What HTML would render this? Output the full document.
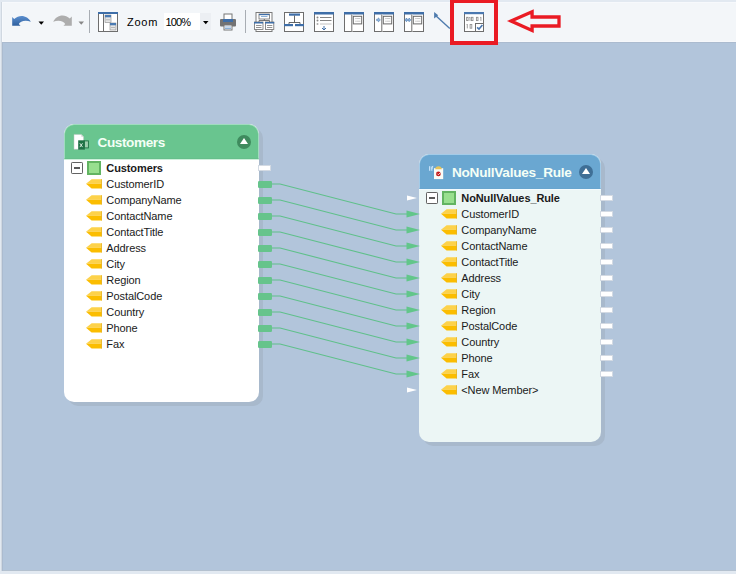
<!DOCTYPE html>
<html><head><meta charset="utf-8">
<style>
*{margin:0;padding:0;box-sizing:border-box}
html,body{width:736px;height:574px;overflow:hidden;background:#e2e9f1;font-family:"Liberation Sans",sans-serif;}
#tb{position:absolute;left:2px;top:2px;width:734px;height:40px;background:#f3f6f9;box-shadow:inset 1px 1px 0 #f7f9fc, inset 0 -1px 0 #f6f8fb;}
#vl{position:absolute;left:1px;top:2px;width:1px;height:569px;background:#d0d8e1}
#cv{position:absolute;left:2px;top:42px;width:734px;height:529px;background:#b2c5db;box-shadow:inset 1px 1px 0 #abbbcf, inset 0 -1px 0 #b4c1cf;}
.abs{position:absolute}
svg{position:absolute;overflow:visible}
.shadow{position:absolute;background:#a8b9cc;border-radius:10px}
.tbl{position:absolute;border-radius:10px;overflow:hidden}
.hdr{position:absolute;left:0;top:0;right:0;height:34px}
.t{position:absolute;font-size:11px;line-height:16px;color:#1a1a1a;white-space:nowrap;letter-spacing:-0.1px}
.ht{position:absolute;font-size:13.6px;font-weight:bold;line-height:16px;color:#f4fff6;white-space:nowrap;letter-spacing:-0.25px}
.mb{position:absolute;width:11.5px;height:11.5px;border:1.5px solid #626262;border-radius:1.2px;background:#fff}
.mbl{position:absolute;left:1.9px;top:4.2px;width:5.8px;height:1.5px;background:#5a5a5a}
.gs{position:absolute;width:13.5px;height:13.5px;border:2.5px solid #62b462;background:#98df8f}
.cw{position:absolute;width:13px;height:6px;background:#fff;border:1px solid #d3dae3}
.cg{position:absolute;width:14px;height:7px;background:#66c48c;border-radius:1.2px}
.cb{position:absolute;width:14px;height:14px;border-radius:50%}
.sep{position:absolute;width:1px;background:#a8adb3}
</style></head><body>
<div id="vl"></div>
<div id="tb"></div>
<div id="cv"></div>

<div class="shadow" style="left:68px;top:128px;width:195px;height:278px"></div>
<div class="shadow" style="left:423px;top:158px;width:182px;height:288px"></div>
<div class="tbl" style="left:64px;top:124px;width:195px;height:278px;background:#fff"><div class="hdr" style="background:#69c58f;height:35px;border:1px solid #a0dcbe;border-bottom:1px solid #66bf8b;border-radius:10px 10px 0 0"></div><div class="hdr" style="top:35px;height:1px;background:#cdf0da"></div></div>
<div class="tbl" style="left:419px;top:154px;width:182px;height:288px;background:#ecf6f5"><div class="hdr" style="background:#6aa7d1;height:35px;border:1px solid #a2cbe8;border-bottom:1px solid #68a5cf;border-radius:10px 10px 0 0"></div><div class="hdr" style="top:35px;height:1px;background:#f3fbfe"></div></div>
<div class="ht" style="left:97.5px;top:135px;letter-spacing:-0.4px">Customers</div>
<div class="ht" style="left:452px;top:165px">NoNullValues_Rule</div>
<div class="cb" style="left:237px;top:135px;background:#3f8b5e"></div>
<svg style="left:240px;top:138px" width="8" height="6" viewBox="0 0 8 6"><path d="M4 0 L8 6 H0 Z" fill="#fff"/></svg>
<div class="cb" style="left:579px;top:165px;background:#3f6f96"></div>
<svg style="left:582px;top:168px" width="8" height="6" viewBox="0 0 8 6"><path d="M4 0 L8 6 H0 Z" fill="#fff"/></svg>
<svg style="left:73px;top:133px" width="17" height="18" viewBox="0 0 17 18">
<path d="M1 1.4 H8.3 L10.6 3.7 V16.3 H1 Z" fill="#fff" stroke="#b8c4bc" stroke-width="0.5"/>
<path d="M8.3 1.4 V3.7 H10.6 Z" fill="#d4d4d4"/>
<rect x="11.2" y="7.9" width="4.2" height="7" fill="#9fcfb0" stroke="#1e7145" stroke-width="0.9"/>
<rect x="5.2" y="7.3" width="6.6" height="9.4" fill="#1e7145"/>
<path d="M6.9 10.3 L9.5 14.1 M9.5 10.3 L6.9 14.1" stroke="#e8f4ec" stroke-width="0.9"/>
</svg>
<svg style="left:428px;top:165px" width="16" height="16" viewBox="0 0 16 16">
<rect x="1" y="1.2" width="1.3" height="4.6" fill="#c4e2fa"/>
<path d="M3.8 5.8 V2.4 Q3.8 1.3 5.2 1.3 M2.9 3 H5" stroke="#c4e2fa" stroke-width="1.2" fill="none"/>
<rect x="6" y="3.2" width="9.2" height="10.9" fill="#fbfbf6"/>
<path d="M7.2 4.2 Q7.4 1.2 10.5 1.2 Q13.6 1.2 13.8 4.2 Z" fill="#e6c45a"/>
<circle cx="10.4" cy="8.9" r="2.35" fill="#c41a1a"/>
<path d="M9.4 8.7 L10.4 9.7 L12.4 7.6" stroke="#fff" stroke-width="0.8" fill="none"/>
</svg>
<div class="mb" style="left:71.2px;top:162.2px"><div class="mbl"></div></div>
<div class="gs" style="left:87.1px;top:161.2px"></div>
<div class="t" style="left:106.3px;top:160px;font-weight:bold">Customers</div>
<div class="cw" style="left:258px;top:165px"></div>
<svg class="ic" style="left:85px;top:179px" width="17" height="10" viewBox="0 0 17 10"><path d="M1 4.8 L6.6 0.2 H16.7 V4.8 Z" fill="#fdd24a"/><path d="M1 4.8 L6.6 9.6 H16.7 V4.8 Z" fill="#fbbd00"/><rect x="16" y="0.2" width="0.7" height="9.4" fill="#e3ab10"/></svg>
<div class="t" style="left:106.3px;top:176px">CustomerID</div>
<div class="cg" style="left:258px;top:181px"></div>
<svg class="ic" style="left:85px;top:195px" width="17" height="10" viewBox="0 0 17 10"><path d="M1 4.8 L6.6 0.2 H16.7 V4.8 Z" fill="#fdd24a"/><path d="M1 4.8 L6.6 9.6 H16.7 V4.8 Z" fill="#fbbd00"/><rect x="16" y="0.2" width="0.7" height="9.4" fill="#e3ab10"/></svg>
<div class="t" style="left:106.3px;top:192px">CompanyName</div>
<div class="cg" style="left:258px;top:197px"></div>
<svg class="ic" style="left:85px;top:211px" width="17" height="10" viewBox="0 0 17 10"><path d="M1 4.8 L6.6 0.2 H16.7 V4.8 Z" fill="#fdd24a"/><path d="M1 4.8 L6.6 9.6 H16.7 V4.8 Z" fill="#fbbd00"/><rect x="16" y="0.2" width="0.7" height="9.4" fill="#e3ab10"/></svg>
<div class="t" style="left:106.3px;top:208px">ContactName</div>
<div class="cg" style="left:258px;top:213px"></div>
<svg class="ic" style="left:85px;top:227px" width="17" height="10" viewBox="0 0 17 10"><path d="M1 4.8 L6.6 0.2 H16.7 V4.8 Z" fill="#fdd24a"/><path d="M1 4.8 L6.6 9.6 H16.7 V4.8 Z" fill="#fbbd00"/><rect x="16" y="0.2" width="0.7" height="9.4" fill="#e3ab10"/></svg>
<div class="t" style="left:106.3px;top:224px">ContactTitle</div>
<div class="cg" style="left:258px;top:229px"></div>
<svg class="ic" style="left:85px;top:243px" width="17" height="10" viewBox="0 0 17 10"><path d="M1 4.8 L6.6 0.2 H16.7 V4.8 Z" fill="#fdd24a"/><path d="M1 4.8 L6.6 9.6 H16.7 V4.8 Z" fill="#fbbd00"/><rect x="16" y="0.2" width="0.7" height="9.4" fill="#e3ab10"/></svg>
<div class="t" style="left:106.3px;top:240px">Address</div>
<div class="cg" style="left:258px;top:245px"></div>
<svg class="ic" style="left:85px;top:259px" width="17" height="10" viewBox="0 0 17 10"><path d="M1 4.8 L6.6 0.2 H16.7 V4.8 Z" fill="#fdd24a"/><path d="M1 4.8 L6.6 9.6 H16.7 V4.8 Z" fill="#fbbd00"/><rect x="16" y="0.2" width="0.7" height="9.4" fill="#e3ab10"/></svg>
<div class="t" style="left:106.3px;top:256px">City</div>
<div class="cg" style="left:258px;top:261px"></div>
<svg class="ic" style="left:85px;top:275px" width="17" height="10" viewBox="0 0 17 10"><path d="M1 4.8 L6.6 0.2 H16.7 V4.8 Z" fill="#fdd24a"/><path d="M1 4.8 L6.6 9.6 H16.7 V4.8 Z" fill="#fbbd00"/><rect x="16" y="0.2" width="0.7" height="9.4" fill="#e3ab10"/></svg>
<div class="t" style="left:106.3px;top:272px">Region</div>
<div class="cg" style="left:258px;top:277px"></div>
<svg class="ic" style="left:85px;top:291px" width="17" height="10" viewBox="0 0 17 10"><path d="M1 4.8 L6.6 0.2 H16.7 V4.8 Z" fill="#fdd24a"/><path d="M1 4.8 L6.6 9.6 H16.7 V4.8 Z" fill="#fbbd00"/><rect x="16" y="0.2" width="0.7" height="9.4" fill="#e3ab10"/></svg>
<div class="t" style="left:106.3px;top:288px">PostalCode</div>
<div class="cg" style="left:258px;top:293px"></div>
<svg class="ic" style="left:85px;top:307px" width="17" height="10" viewBox="0 0 17 10"><path d="M1 4.8 L6.6 0.2 H16.7 V4.8 Z" fill="#fdd24a"/><path d="M1 4.8 L6.6 9.6 H16.7 V4.8 Z" fill="#fbbd00"/><rect x="16" y="0.2" width="0.7" height="9.4" fill="#e3ab10"/></svg>
<div class="t" style="left:106.3px;top:304px">Country</div>
<div class="cg" style="left:258px;top:309px"></div>
<svg class="ic" style="left:85px;top:323px" width="17" height="10" viewBox="0 0 17 10"><path d="M1 4.8 L6.6 0.2 H16.7 V4.8 Z" fill="#fdd24a"/><path d="M1 4.8 L6.6 9.6 H16.7 V4.8 Z" fill="#fbbd00"/><rect x="16" y="0.2" width="0.7" height="9.4" fill="#e3ab10"/></svg>
<div class="t" style="left:106.3px;top:320px">Phone</div>
<div class="cg" style="left:258px;top:325px"></div>
<svg class="ic" style="left:85px;top:339px" width="17" height="10" viewBox="0 0 17 10"><path d="M1 4.8 L6.6 0.2 H16.7 V4.8 Z" fill="#fdd24a"/><path d="M1 4.8 L6.6 9.6 H16.7 V4.8 Z" fill="#fbbd00"/><rect x="16" y="0.2" width="0.7" height="9.4" fill="#e3ab10"/></svg>
<div class="t" style="left:106.3px;top:336px">Fax</div>
<div class="cg" style="left:258px;top:341px"></div>
<div class="mb" style="left:426.2px;top:192.2px"><div class="mbl"></div></div>
<div class="gs" style="left:442.1px;top:191.2px"></div>
<div class="t" style="left:461.3px;top:190px;font-weight:bold">NoNullValues_Rule</div>
<svg class="ic" style="left:440px;top:209px" width="17" height="10" viewBox="0 0 17 10"><path d="M1 4.8 L6.6 0.2 H16.7 V4.8 Z" fill="#fdd24a"/><path d="M1 4.8 L6.6 9.6 H16.7 V4.8 Z" fill="#fbbd00"/><rect x="16" y="0.2" width="0.7" height="9.4" fill="#e3ab10"/></svg>
<div class="t" style="left:461.3px;top:206px">CustomerID</div>
<svg class="ic" style="left:440px;top:225px" width="17" height="10" viewBox="0 0 17 10"><path d="M1 4.8 L6.6 0.2 H16.7 V4.8 Z" fill="#fdd24a"/><path d="M1 4.8 L6.6 9.6 H16.7 V4.8 Z" fill="#fbbd00"/><rect x="16" y="0.2" width="0.7" height="9.4" fill="#e3ab10"/></svg>
<div class="t" style="left:461.3px;top:222px">CompanyName</div>
<svg class="ic" style="left:440px;top:241px" width="17" height="10" viewBox="0 0 17 10"><path d="M1 4.8 L6.6 0.2 H16.7 V4.8 Z" fill="#fdd24a"/><path d="M1 4.8 L6.6 9.6 H16.7 V4.8 Z" fill="#fbbd00"/><rect x="16" y="0.2" width="0.7" height="9.4" fill="#e3ab10"/></svg>
<div class="t" style="left:461.3px;top:238px">ContactName</div>
<svg class="ic" style="left:440px;top:257px" width="17" height="10" viewBox="0 0 17 10"><path d="M1 4.8 L6.6 0.2 H16.7 V4.8 Z" fill="#fdd24a"/><path d="M1 4.8 L6.6 9.6 H16.7 V4.8 Z" fill="#fbbd00"/><rect x="16" y="0.2" width="0.7" height="9.4" fill="#e3ab10"/></svg>
<div class="t" style="left:461.3px;top:254px">ContactTitle</div>
<svg class="ic" style="left:440px;top:273px" width="17" height="10" viewBox="0 0 17 10"><path d="M1 4.8 L6.6 0.2 H16.7 V4.8 Z" fill="#fdd24a"/><path d="M1 4.8 L6.6 9.6 H16.7 V4.8 Z" fill="#fbbd00"/><rect x="16" y="0.2" width="0.7" height="9.4" fill="#e3ab10"/></svg>
<div class="t" style="left:461.3px;top:270px">Address</div>
<svg class="ic" style="left:440px;top:289px" width="17" height="10" viewBox="0 0 17 10"><path d="M1 4.8 L6.6 0.2 H16.7 V4.8 Z" fill="#fdd24a"/><path d="M1 4.8 L6.6 9.6 H16.7 V4.8 Z" fill="#fbbd00"/><rect x="16" y="0.2" width="0.7" height="9.4" fill="#e3ab10"/></svg>
<div class="t" style="left:461.3px;top:286px">City</div>
<svg class="ic" style="left:440px;top:305px" width="17" height="10" viewBox="0 0 17 10"><path d="M1 4.8 L6.6 0.2 H16.7 V4.8 Z" fill="#fdd24a"/><path d="M1 4.8 L6.6 9.6 H16.7 V4.8 Z" fill="#fbbd00"/><rect x="16" y="0.2" width="0.7" height="9.4" fill="#e3ab10"/></svg>
<div class="t" style="left:461.3px;top:302px">Region</div>
<svg class="ic" style="left:440px;top:321px" width="17" height="10" viewBox="0 0 17 10"><path d="M1 4.8 L6.6 0.2 H16.7 V4.8 Z" fill="#fdd24a"/><path d="M1 4.8 L6.6 9.6 H16.7 V4.8 Z" fill="#fbbd00"/><rect x="16" y="0.2" width="0.7" height="9.4" fill="#e3ab10"/></svg>
<div class="t" style="left:461.3px;top:318px">PostalCode</div>
<svg class="ic" style="left:440px;top:337px" width="17" height="10" viewBox="0 0 17 10"><path d="M1 4.8 L6.6 0.2 H16.7 V4.8 Z" fill="#fdd24a"/><path d="M1 4.8 L6.6 9.6 H16.7 V4.8 Z" fill="#fbbd00"/><rect x="16" y="0.2" width="0.7" height="9.4" fill="#e3ab10"/></svg>
<div class="t" style="left:461.3px;top:334px">Country</div>
<svg class="ic" style="left:440px;top:353px" width="17" height="10" viewBox="0 0 17 10"><path d="M1 4.8 L6.6 0.2 H16.7 V4.8 Z" fill="#fdd24a"/><path d="M1 4.8 L6.6 9.6 H16.7 V4.8 Z" fill="#fbbd00"/><rect x="16" y="0.2" width="0.7" height="9.4" fill="#e3ab10"/></svg>
<div class="t" style="left:461.3px;top:350px">Phone</div>
<svg class="ic" style="left:440px;top:369px" width="17" height="10" viewBox="0 0 17 10"><path d="M1 4.8 L6.6 0.2 H16.7 V4.8 Z" fill="#fdd24a"/><path d="M1 4.8 L6.6 9.6 H16.7 V4.8 Z" fill="#fbbd00"/><rect x="16" y="0.2" width="0.7" height="9.4" fill="#e3ab10"/></svg>
<div class="t" style="left:461.3px;top:366px">Fax</div>
<svg class="ic" style="left:440px;top:385px" width="17" height="10" viewBox="0 0 17 10"><path d="M1 4.8 L6.6 0.2 H16.7 V4.8 Z" fill="#fdd24a"/><path d="M1 4.8 L6.6 9.6 H16.7 V4.8 Z" fill="#fbbd00"/><rect x="16" y="0.2" width="0.7" height="9.4" fill="#e3ab10"/></svg>
<div class="t" style="left:461.3px;top:382px">&lt;New Member&gt;</div>
<div class="cw" style="left:600px;top:195px"></div>
<div class="cw" style="left:600px;top:211px"></div>
<div class="cw" style="left:600px;top:227px"></div>
<div class="cw" style="left:600px;top:243px"></div>
<div class="cw" style="left:600px;top:259px"></div>
<div class="cw" style="left:600px;top:275px"></div>
<div class="cw" style="left:600px;top:291px"></div>
<div class="cw" style="left:600px;top:307px"></div>
<div class="cw" style="left:600px;top:323px"></div>
<div class="cw" style="left:600px;top:339px"></div>
<div class="cw" style="left:600px;top:355px"></div>
<div class="cw" style="left:600px;top:371px"></div>
<svg style="left:0;top:0" width="736" height="574">
<polyline points="272,184 280,184 396,214 407,214" fill="none" stroke="#5fc08a" stroke-width="1.1"/>
<path d="M406.5 210.5 L420 214 L406.5 217.5 Z" fill="#62c68a"/>
<polyline points="272,200 280,200 396,230 407,230" fill="none" stroke="#5fc08a" stroke-width="1.1"/>
<path d="M406.5 226.5 L420 230 L406.5 233.5 Z" fill="#62c68a"/>
<polyline points="272,216 280,216 396,246 407,246" fill="none" stroke="#5fc08a" stroke-width="1.1"/>
<path d="M406.5 242.5 L420 246 L406.5 249.5 Z" fill="#62c68a"/>
<polyline points="272,232 280,232 396,262 407,262" fill="none" stroke="#5fc08a" stroke-width="1.1"/>
<path d="M406.5 258.5 L420 262 L406.5 265.5 Z" fill="#62c68a"/>
<polyline points="272,248 280,248 396,278 407,278" fill="none" stroke="#5fc08a" stroke-width="1.1"/>
<path d="M406.5 274.5 L420 278 L406.5 281.5 Z" fill="#62c68a"/>
<polyline points="272,264 280,264 396,294 407,294" fill="none" stroke="#5fc08a" stroke-width="1.1"/>
<path d="M406.5 290.5 L420 294 L406.5 297.5 Z" fill="#62c68a"/>
<polyline points="272,280 280,280 396,310 407,310" fill="none" stroke="#5fc08a" stroke-width="1.1"/>
<path d="M406.5 306.5 L420 310 L406.5 313.5 Z" fill="#62c68a"/>
<polyline points="272,296 280,296 396,326 407,326" fill="none" stroke="#5fc08a" stroke-width="1.1"/>
<path d="M406.5 322.5 L420 326 L406.5 329.5 Z" fill="#62c68a"/>
<polyline points="272,312 280,312 396,342 407,342" fill="none" stroke="#5fc08a" stroke-width="1.1"/>
<path d="M406.5 338.5 L420 342 L406.5 345.5 Z" fill="#62c68a"/>
<polyline points="272,328 280,328 396,358 407,358" fill="none" stroke="#5fc08a" stroke-width="1.1"/>
<path d="M406.5 354.5 L420 358 L406.5 361.5 Z" fill="#62c68a"/>
<polyline points="272,344 280,344 396,374 407,374" fill="none" stroke="#5fc08a" stroke-width="1.1"/>
<path d="M406.5 370.5 L420 374 L406.5 377.5 Z" fill="#62c68a"/>
<path d="M407 195.5 L417 198 L407 200.5 Z" fill="#fff"/>
<path d="M407 387.5 L417 390 L407 392.5 Z" fill="#fff"/>
</svg>

<!-- undo -->
<svg style="left:11px;top:14px" width="22" height="13" viewBox="0 0 22 13">
<defs><linearGradient id="ug" x1="0" y1="0" x2="0" y2="1"><stop offset="0" stop-color="#5b8fcf"/><stop offset="1" stop-color="#2f609f"/></linearGradient></defs><path d="M1.2 3 L1.2 11.7 L9.5 11.7 L7.8 10 C9 7.5 14 5.5 19.8 7.8 C17 2 9 -0.5 3.2 5 Z" fill="url(#ug)"/>
</svg>
<svg style="left:38px;top:21px" width="7" height="5" viewBox="0 0 7 5"><path d="M0.5 0.5 H6 L3.25 3.8 Z" fill="#000"/></svg>
<!-- redo -->
<svg style="left:51px;top:14px" width="22" height="13" viewBox="0 0 22 13">
<path d="M20.8 2.6 L20.8 11.7 L12.5 11.7 L14.2 10 C13 7.5 8 5.5 2.2 7.8 C5 1.5 13 -1 18.8 4.6 Z" fill="#adadad"/>
</svg>
<svg style="left:78px;top:21px" width="7" height="5" viewBox="0 0 7 5"><path d="M0.5 0.5 H6 L3.25 3.8 Z" fill="#888"/></svg>
<div class="sep" style="left:89px;top:10px;height:23px"></div>
<!-- layout icon -->
<svg style="left:98px;top:12px" width="20" height="20" viewBox="0 0 20 20">
<rect x="0.5" y="0.5" width="19" height="19" fill="#fff" stroke="#6e6e6e"/>
<rect x="0" y="0" width="20" height="2" fill="#3e6ea8"/>
<path d="M5.5 2 V19.5" stroke="#6e6e6e"/>
<rect x="7" y="3" width="6" height="7.5" fill="#e6e6e6" stroke="#888" stroke-width="0.6"/>
<rect x="7" y="3" width="6" height="2.3" fill="#4a7ab2"/><path d="M8 7.8 H12" stroke="#999" stroke-width="0.6"/>
<rect x="12" y="11" width="6" height="7" fill="#e6e6e6" stroke="#888" stroke-width="0.6"/>
<rect x="12" y="11" width="6" height="2.3" fill="#4a7ab2"/><path d="M13 15.5 H17" stroke="#999" stroke-width="0.6"/>
</svg>
<div class="abs" style="left:127px;top:14px;font-size:11px;line-height:16px;color:#000;letter-spacing:0.75px">Zoom</div>
<div class="abs" style="left:164px;top:13px;width:47px;height:17px;background:#fff"></div>
<div class="abs" style="left:200px;top:13px;width:11px;height:17px;background:#eceff3"></div>
<div class="abs" style="left:165.5px;top:14px;font-size:11px;line-height:16px;color:#000;letter-spacing:-0.9px">100%</div>
<svg style="left:203px;top:21px" width="6" height="4" viewBox="0 0 6 4"><path d="M0 0 H5.5 L2.75 3.3 Z" fill="#000"/></svg>
<!-- printer -->
<svg style="left:220px;top:14px" width="17" height="16" viewBox="0 0 17 16">
<rect x="4" y="0" width="8" height="6" fill="#fff" stroke="#777" stroke-width="1"/>
<rect x="0" y="5" width="16" height="7.5" rx="1" fill="#737373"/>
<rect x="3" y="5" width="10" height="3" fill="#3e6ea8"/>
<rect x="4" y="11" width="8" height="5" fill="#fff" stroke="#777" stroke-width="1"/>
<path d="M5 13 H11 M5 14.5 H11" stroke="#6f9ccc" stroke-width="0.8"/>
</svg>
<div class="sep" style="left:245px;top:10px;height:23px"></div>

<svg style="left:254px;top:12px" width="21" height="20" viewBox="0 0 21 20">
<rect x="2" y="0.5" width="16" height="19" fill="#fff" stroke="#7a7a7a"/>
<rect x="5" y="2" width="10.5" height="5" fill="#fff" stroke="#6e6e6e" stroke-width="0.8"/>
<rect x="5" y="2" width="10.5" height="1.2" fill="#3e6ea8"/>
<path d="M7 4.5 H13.5" stroke="#6f9ccc" stroke-width="0.8"/>
<path d="M10.3 7 V8.5 M5 10 V8.5 H15.5 V10" stroke="#555" stroke-width="0.8" fill="none"/>
<rect x="0.5" y="10" width="8.5" height="7.5" fill="#fff" stroke="#6e6e6e" stroke-width="0.8"/>
<rect x="0" y="10" width="9" height="1.5" fill="#3e6ea8"/>
<path d="M2 13.5 H7.5 M2 15.5 H7.5" stroke="#777" stroke-width="0.8"/>
<rect x="11.5" y="10" width="8.3" height="7.5" fill="#fff" stroke="#6e6e6e" stroke-width="0.8"/>
<rect x="11.1" y="10" width="9.1" height="1.5" fill="#3e6ea8"/>
<path d="M13 13.5 H18.3 M13 15.5 H18.3" stroke="#777" stroke-width="0.8"/>
</svg>
<svg style="left:284px;top:12px" width="20" height="20" viewBox="0 0 20 20"><rect x="0.5" y="0.5" width="19" height="19" fill="#fff" stroke="#6e6e6e"/><rect x="5" y="1.5" width="11" height="2.2" fill="#3e6ea8"/><path d="M10.5 3.5 V10.5 M5 12.5 V10.5 H16 V12.5" stroke="#555" stroke-width="0.9" fill="none"/><rect x="0" y="12" width="9" height="2.2" fill="#3e6ea8"/><rect x="11" y="12" width="9" height="2.2" fill="#3e6ea8"/></svg>
<svg style="left:314px;top:12px" width="20" height="20" viewBox="0 0 20 20"><rect x="0.5" y="0.5" width="19" height="19" fill="#fff" stroke="#6e6e6e"/><rect x="0" y="0" width="20" height="2.5" fill="#3e6ea8"/><circle cx="3.5" cy="5.5" r="1" fill="#888"/><circle cx="3.5" cy="8.5" r="1" fill="#888"/><circle cx="3.5" cy="12" r="1" fill="#aaa"/><path d="M6 5.5 H17.5 M6 8.5 H17.5" stroke="#777" stroke-width="0.9"/><path d="M6 12 H17.5" stroke="#bbb" stroke-width="0.9"/><path d="M10 14 V18 M8 16 L10 18 L12 16" stroke="#3e6ea8" stroke-width="1" fill="none"/></svg>
<svg style="left:344px;top:12px" width="20" height="20" viewBox="0 0 20 20"><rect x="0.5" y="0.5" width="19" height="19" fill="#fff" stroke="#6e6e6e"/><rect x="0" y="0" width="20" height="2.5" fill="#3e6ea8"/><rect x="7" y="2.5" width="1" height="17" fill="#9a9a9a"/><rect x="8" y="2.5" width="1" height="17" fill="#d4d4d4"/><rect x="9.3" y="4.3" width="8.4" height="7.6" fill="#fff" stroke="#6a6a6a" stroke-width="1"/><path d="M12.2 6.6 H16.4 M12.2 9.2 H16.4" stroke="#b5b5b5" stroke-width="0.8"/><path d="M11 6.6 H11.6 M11 9.2 H11.6" stroke="#999" stroke-width="0.8"/></svg>
<svg style="left:374px;top:12px" width="20" height="20" viewBox="0 0 20 20"><rect x="0.5" y="0.5" width="19" height="19" fill="#fff" stroke="#6e6e6e"/><rect x="0" y="0" width="20" height="2.5" fill="#3e6ea8"/><rect x="7" y="2.5" width="1" height="17" fill="#9a9a9a"/><rect x="8" y="2.5" width="1" height="17" fill="#d4d4d4"/><rect x="9.3" y="4.3" width="8.4" height="7.6" fill="#fff" stroke="#6a6a6a" stroke-width="1"/><path d="M12.2 6.6 H16.4 M12.2 9.2 H16.4" stroke="#b5b5b5" stroke-width="0.8"/><path d="M11 6.6 H11.6 M11 9.2 H11.6" stroke="#999" stroke-width="0.8"/><path d="M2.6 7.2 H4.3 V5.9 L6.4 7.9 L4.3 9.9 V8.6 H2.6 Z" fill="#9cc0e8" stroke="#4a7ab0" stroke-width="0.6"/></svg>
<svg style="left:404px;top:12px" width="20" height="20" viewBox="0 0 20 20"><rect x="0.5" y="0.5" width="19" height="19" fill="#fff" stroke="#6e6e6e"/><rect x="0" y="0" width="20" height="2.5" fill="#3e6ea8"/><rect x="7" y="2.5" width="1" height="17" fill="#9a9a9a"/><rect x="8" y="2.5" width="1" height="17" fill="#d4d4d4"/><rect x="9.3" y="4.3" width="8.4" height="7.6" fill="#fff" stroke="#6a6a6a" stroke-width="1"/><path d="M12.2 6.6 H16.4 M12.2 9.2 H16.4" stroke="#b5b5b5" stroke-width="0.8"/><path d="M11 6.6 H11.6 M11 9.2 H11.6" stroke="#999" stroke-width="0.8"/><path d="M0.8 7.9 L2.6 6 V7.3 H5 V6 L6.9 7.9 L5 9.8 V8.5 H2.6 V9.8 Z" fill="#8fb4e0" stroke="#4a7ab0" stroke-width="0.6"/></svg>
<svg style="left:428px;top:6px" width="28" height="28" viewBox="0 0 28 28">
<path d="M7.6 9.6 L21.8 22.6" stroke="#4e7bad" stroke-width="1.4"/>
<path d="M6.1 6 L10.2 9.2 L6.1 12.5 Z" fill="#4e7bad"/>
</svg>
<svg style="left:464px;top:12px" width="20" height="20" viewBox="0 0 20 20">
<rect x="0.5" y="0.5" width="19" height="19" fill="#fff" stroke="#6e6e6e"/>
<rect x="0" y="0" width="20" height="2.2" fill="#4a78b0"/>
<g fill="none" stroke="#8e8e8e" stroke-width="0.85">
<rect x="2.6" y="5.3" width="1.5" height="3.3"/><path d="M6 5 V8.9 M5.3 5.7 L6 5"/><rect x="7.4" y="5.3" width="1.6" height="3.3"/><rect x="12.4" y="5.3" width="1.6" height="3.3"/><path d="M16.9 5 V8.9 M16.2 5.7 L16.9 5"/>
<path d="M3.3 12.2 V16.4 M2.6 12.9 L3.3 12.2"/><rect x="6.1" y="12.5" width="1.7" height="3.7"/>
</g>
<rect x="11.5" y="11.5" width="8" height="8" fill="#fff" stroke="#6e6e6e" stroke-width="1"/>
<path d="M13.1 15.3 L15 17.1 L18.4 13.1" stroke="#4a78b0" stroke-width="1.6" fill="none"/>
</svg>
<div class="abs" style="left:450px;top:-1px;width:48px;height:46px;border:4px solid #ea1b24"></div>
<svg style="left:0;top:0" width="736" height="50"><path d="M511 21 L532.1 11.8 L532.1 17 L559 17 L559 26 L532.1 26 L532.1 30.4 Z" fill="none" stroke="#ea1b24" stroke-width="3.3" stroke-linejoin="miter"/></svg>
</body></html>
